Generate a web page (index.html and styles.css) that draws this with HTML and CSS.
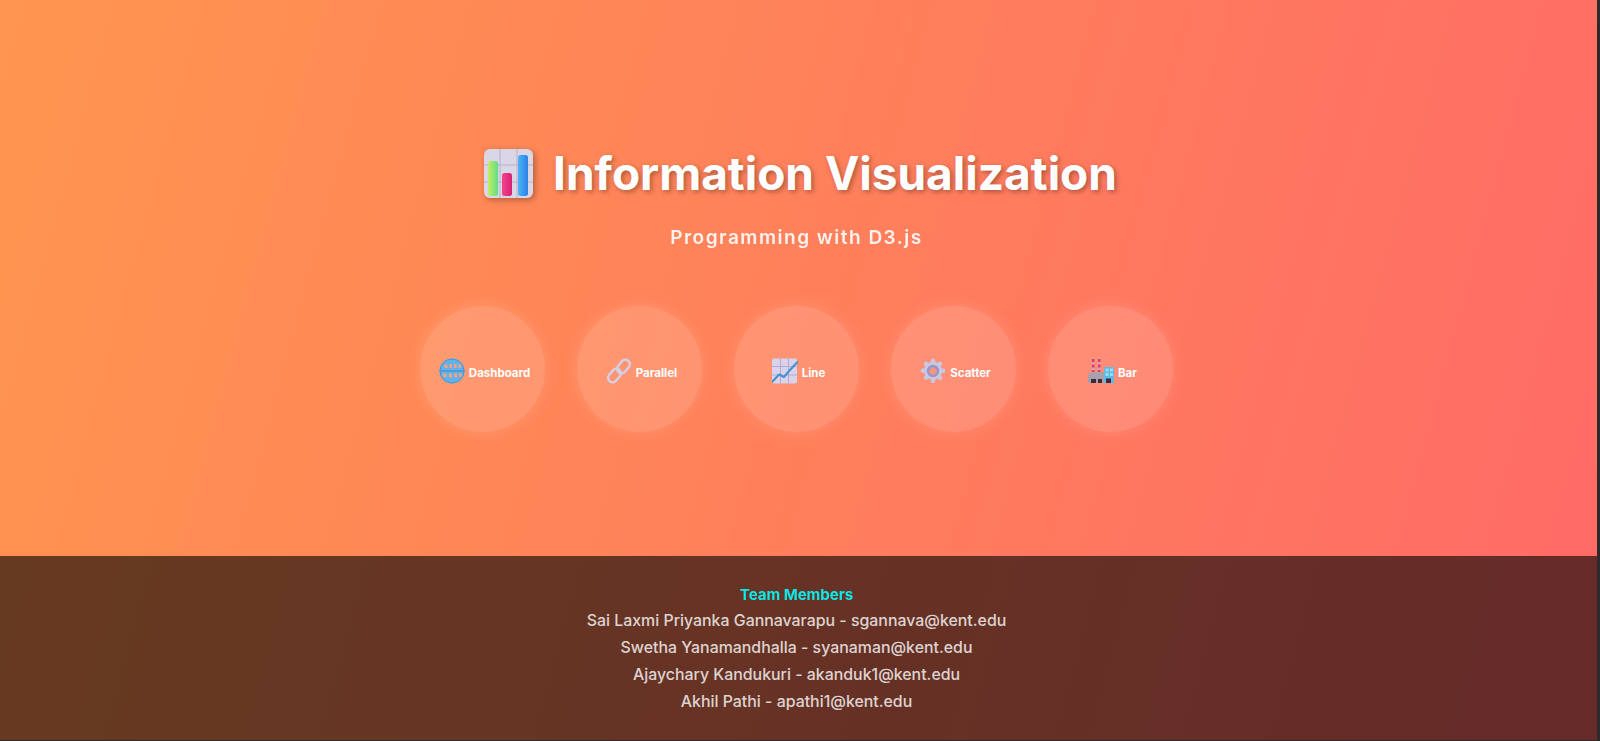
FILE: index.html
```html
<!DOCTYPE html>
<html lang="en">
<head>
<meta charset="utf-8">
<title>Information Visualization</title>
<link rel="stylesheet" href="styles.css">
</head>
<body>
<div class="page">
  <main class="hero">
    <h1 class="title">
      <svg class="title-icon" viewBox="0 0 49 49" aria-hidden="true">
        <defs>
          <linearGradient id="g1" x1="0" y1="0" x2="1" y2="0"><stop offset="0" stop-color="#c6ee5e"/><stop offset="1" stop-color="#5fdc8a"/></linearGradient>
          <linearGradient id="g2" x1="0" y1="0" x2="1" y2="0"><stop offset="0" stop-color="#f0468c"/><stop offset="1" stop-color="#d91f78"/></linearGradient>
          <linearGradient id="g3" x1="0" y1="0" x2="1" y2="0"><stop offset="0" stop-color="#4cb4f8"/><stop offset="1" stop-color="#2c80e4"/></linearGradient>
        </defs>
        <rect width="49" height="49" rx="6" fill="#d9d7e6"/>
        <path d="M16 0V49M33 0V49M0 16H49M0 33H49" stroke="#b5b1c6" stroke-width="1"/>
        <rect x="4" y="12" width="10" height="35" rx="2.5" fill="url(#g1)"/>
        <rect x="18" y="24" width="10" height="23" rx="2.5" fill="url(#g2)"/>
        <rect x="34" y="6" width="10" height="41" rx="2.5" fill="url(#g3)"/>
      </svg>
      <span>Information Visualization</span>
    </h1>
    <p class="subtitle">Programming with D3.js</p>
    <nav class="circles">
      <a class="circle" href="#">
        <svg class="icon" viewBox="0 0 26 26" aria-hidden="true">
          <circle cx="13" cy="13" r="12.5" fill="#62b2ea"/>
          <path d="M5.500 6.500h3v3.500h-3zM10.500 6h2.500v4h-2.500zM15 6h2.500v4h-2.500zM19.500 6.500h2.500v3.500h-2.500zM4 15.500h3.500v3.500H4zM10 15.500h3v4h-3zM15 15.500h3v4h-3zM20 15.500h3v3.500h-3z" fill="#f2a484"/>
          <path d="M.5 13h25" stroke="#3d86c8" stroke-width="1"/>
          <circle cx="13" cy="13" r="12" fill="none" stroke="#4a94d6" stroke-width="1"/>
        </svg>
        <span>Dashboard</span>
      </a>
      <a class="circle" href="#">
        <svg class="icon" viewBox="0 0 26 26" aria-hidden="true">
          <g fill="none" stroke="#d5cfe6" stroke-width="2.400">
            <rect x="-7.500" y="-4.500" width="15" height="9" rx="4.500" transform="translate(8.500 17.500) rotate(-50)"/>
            <rect x="-7.500" y="-4.500" width="15" height="9" rx="4.500" transform="translate(17.500 8.500) rotate(-50)"/>
          </g>
        </svg>
        <span>Parallel</span>
      </a>
      <a class="circle" href="#">
        <svg class="icon" viewBox="0 0 26 26" aria-hidden="true">
          <rect width="25" height="25" y=".5" rx="2" fill="#d8d2ea"/>
          <path d="M8.500 .5V25.500M16.500 .5V25.500M0 8.500H25M0 17H25" stroke="#b3abcd" stroke-width="1"/>
          <path d="M.5 23.500 7 16.500 12 19 17.500 12.500 25.500 4" fill="none" stroke="#4590d2" stroke-width="2" stroke-linecap="round" stroke-linejoin="round"/>
        </svg>
        <span>Line</span>
      </a>
      <a class="circle" href="#">
        <svg class="icon" viewBox="0 0 26 26" aria-hidden="true">
          <path d="M13 .5a2.200 2.200 0 0 1 2.200 2.200v1.400l2.400 1 1-1a2.200 2.200 0 0 1 3.100 3.100l-1 1 1 2.400h1.400a2.200 2.200 0 0 1 0 4.400h-1.400l-1 2.400 1 1a2.200 2.200 0 0 1-3.100 3.100l-1-1-2.400 1v1.400a2.200 2.200 0 0 1-4.400 0v-1.400l-2.400-1-1 1a2.200 2.200 0 0 1-3.100-3.100l1-1-1-2.400H2.900a2.200 2.200 0 0 1 0-4.400h1.400l1-2.400-1-1a2.200 2.200 0 0 1 3.100-3.100l1 1 2.400-1V2.700A2.200 2.200 0 0 1 13 .5z" fill="#c9c8e2"/>
          <circle cx="13" cy="13" r="6.200" fill="#9a97c8"/>
          <circle cx="13" cy="13" r="3.600" fill="#f4977c"/>
        </svg>
        <span>Scatter</span>
      </a>
      <a class="circle" href="#">
        <svg class="icon" viewBox="0 0 26 26" aria-hidden="true">
          <path d="M4 0h2.500v15H4zM10 0h2.500v15H10z" fill="#c9a9b4"/>
          <path d="M4 1h2.500v3H4zM10 1h2.500v3H10zM4 6.500h2.500v3H4zM10 6.500h2.500v3H10zM4 12h2.500v2.500H4zM10 12h2.500v2.500H10z" fill="#e03a68"/>
          <path d="M0 25V16.500L4 14H16V25z" fill="#a8a1ab"/>
          <rect x="16" y="9" width="10" height="16" fill="#5fb8e6"/>
          <path d="M17.500 10.500h3v3h-3zM22 10.500h3v3h-3zM17.500 15h3v3h-3zM22 15h3v3h-3z" fill="#9adcf0"/>
          <path d="M3 21h5v4H3zM10 21h4v4h-4zM18 20.500h5v4.500h-5z" fill="#3d2a3c"/>
        </svg>
        <span>Bar</span>
      </a>
    </nav>
  </main>
  <footer class="team">
    <h2 class="team-title">Team Members</h2>
    <p class="member">Sai Laxmi Priyanka Gannavarapu - sgannava@kent.edu</p>
    <p class="member">Swetha Yanamandhalla - syanaman@kent.edu</p>
    <p class="member">Ajaychary Kandukuri - akanduk1@kent.edu</p>
    <p class="member">Akhil Pathi - apathi1@kent.edu</p>
  </footer>
</div>
</body>
</html>
```
FILE: styles.css
```css
* { box-sizing: border-box; }

html, body {
  margin: 0;
  height: 741px;
  overflow: hidden;
  background: #2c2b2b;
}

body {
  font-family: Inter, "Liberation Sans", sans-serif;
  color: #fff;
}

.page {
  width: 1597px;
  height: 740px;
  display: flex;
  flex-direction: column;
  background: linear-gradient(105deg, #ff954f 0%, #ff6c66 96%);
}

.hero {
  height: 556px;
  padding: 143px 4px 0 0;
  display: flex;
  flex-direction: column;
  align-items: center;
}

.title {
  margin: 0;
  height: 60px;
  display: flex;
  align-items: center;
  gap: 20px;
  padding-left: 8px;
  font-size: 46px;
  font-weight: 700;
  line-height: 60px;
  text-shadow: 2px 2px 5px rgba(0, 0, 0, 0.32);
}

.title-icon {
  width: 49px;
  height: 49px;
  filter: drop-shadow(2px 2px 3px rgba(0, 0, 0, 0.3)) blur(0.7px);
}

.subtitle {
  margin: 21px 0 0;
  height: 28px;
  font-size: 19px;
  font-weight: 600;
  line-height: 28px;
  letter-spacing: 1.5px;
  opacity: 0.9;
}

.circles {
  margin-top: 54px;
  display: flex;
  gap: 32px;
}

.circle {
  width: 125px;
  height: 126px;
  padding: 8px 0 0 4px;
  border-radius: 50%;
  display: flex;
  align-items: center;
  justify-content: center;
  gap: 4px;
  background: rgba(255, 255, 255, 0.15);
  box-shadow: 0 0 16px rgba(255, 255, 255, 0.14);
  color: #fff;
  font-size: 11.5px;
  font-weight: 700;
  text-decoration: none;
}

.icon {
  width: 26px;
  height: 26px;
  margin-top: -5px;
  filter: blur(0.5px);
}

.team {
  height: 184px;
  padding: 28px 4px 0 0;
  background: rgba(0, 0, 0, 0.6);
  text-align: center;
}

.team-title {
  margin: 0;
  font-size: 15px;
  font-weight: 700;
  line-height: 21px;
  color: #00ffff;
  opacity: 0.9;
}

.member {
  margin: 5px 0 0;
  font-size: 15.9px;
  font-weight: 500;
  line-height: 22px;
  color: rgba(255, 255, 255, 0.8);
}
```
